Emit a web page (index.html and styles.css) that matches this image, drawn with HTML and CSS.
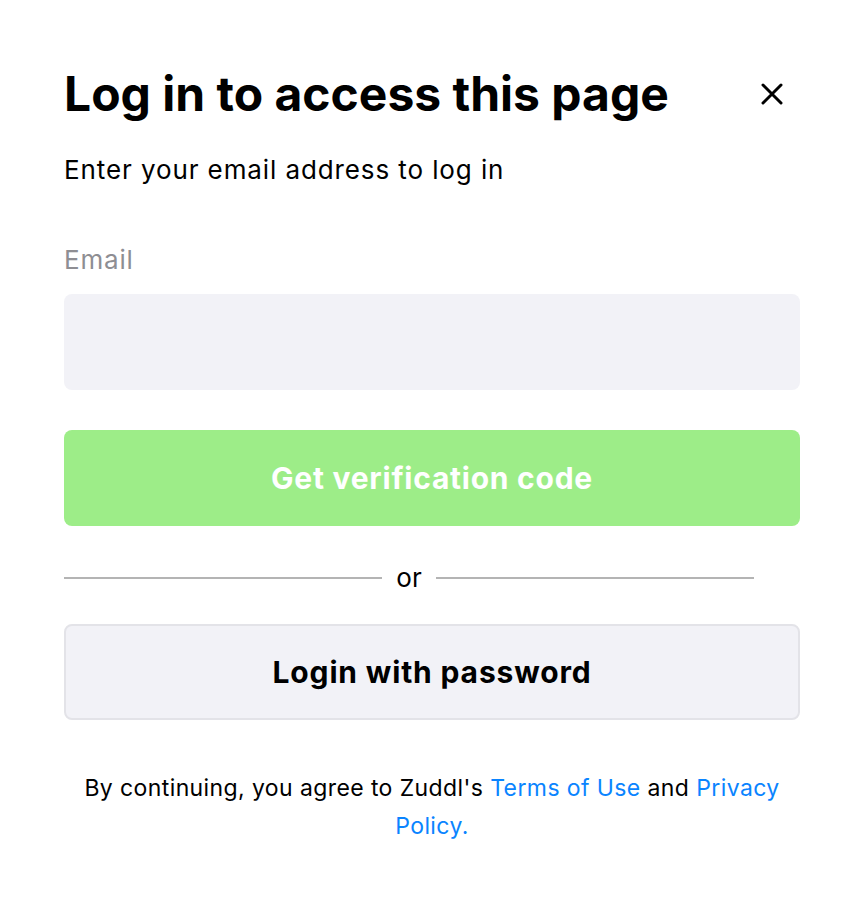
FILE: index.html
```html
<!DOCTYPE html>
<html>
<head>
<meta charset="utf-8">
<link rel="stylesheet" href="styles.css">
</head>
<body>
<div class="modal">
  <div class="header">
    <h1 class="title">Log in to access this page</h1>
    <button class="close" aria-label="Close">
      <svg width="24" height="24" viewBox="0 0 24 24"><path d="M3 3L21 21M21 3L3 21" stroke="#000" stroke-width="3" stroke-linecap="round"/></svg>
    </button>
  </div>
  <p class="subtitle">Enter your email address to log in</p>
  <label class="label">Email</label>
  <div class="input"></div>
  <button class="btn btn-primary">Get verification code</button>
  <div class="divider"><span class="line"></span><span class="or">or</span><span class="line"></span></div>
  <button class="btn btn-secondary">Login with password</button>
  <p class="terms">By continuing, you agree to Zuddl's <a>Terms of Use</a> and <a>Privacy Policy.</a></p>
</div>
</body>
</html>
```
FILE: styles.css
```css
* { box-sizing: border-box; }
body {
  margin: 0;
  background: #fff;
  font-family: Inter, "Noto Sans", sans-serif;
  color: #000;
}
.modal {
  padding: 64px 64px 0 64px;
  display: flex;
  flex-direction: column;
}
.header {
  display: flex;
  align-items: center;
  justify-content: space-between;
}
.title {
  margin: 0;
  font-size: 48px;
  font-weight: 700;
  line-height: 60px;
}
.close {
  background: none;
  border: 0;
  padding: 0;
  margin-right: 16px;
  width: 24px;
  height: 24px;
  display: flex;
}
.subtitle {
  margin: 28px 0 0 0;
  font-size: 26px;
  line-height: 36px;
  letter-spacing: 0.9px;
}
.label {
  margin-top: 54px;
  font-size: 26px;
  line-height: 36px;
  letter-spacing: 0.8px;
  color: #8e8e93;
}
.input {
  margin-top: 16px;
  height: 96px;
  border-radius: 8px;
  background: #f2f2f7;
}
.btn {
  height: 96px;
  border-radius: 8px;
  font-family: inherit;
  font-weight: 700;
  font-size: 30px;
}
.btn-primary {
  margin-top: 40px;
  background: #9ded88;
  color: #fff;
  border: 0;
  letter-spacing: 0.75px;
}
.divider {
  margin-top: 34px;
  width: 690px;
  display: flex;
  align-items: center;
  gap: 14px;
}
.line {
  flex: 1;
  height: 2px;
  background: #b4b4b4;
}
.or {
  font-size: 26px;
  line-height: 36px;
}
.btn-secondary {
  margin-top: 28px;
  height: 96px;
  background: #f2f2f7;
  border: 2px solid #e3e3e8;
  color: #000;
  letter-spacing: 0.85px;
}
.terms {
  margin: 49px 0 0 0;
  text-align: center;
  font-size: 23px;
  line-height: 38px;
  letter-spacing: 0.4px;
}
.terms a {
  color: #0a84ff;
}
```
